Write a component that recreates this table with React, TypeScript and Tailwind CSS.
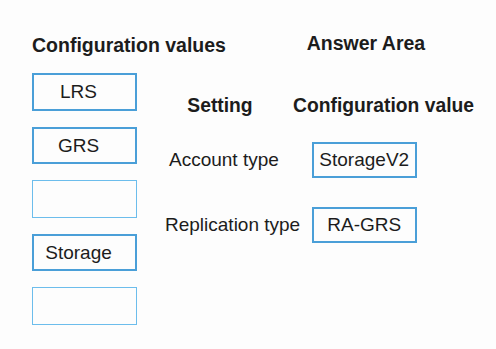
const leftValues = ['LRS', 'GRS', '', 'Storage', ''];

const rows = [
  { setting: 'Account type', value: 'StorageV2', pad: 'pl-[9px]' },
  { setting: 'Replication type', value: 'RA-GRS', pad: 'pl-[5px]' },
];

const ValueBox = ({ label }: { label: string }) => {
  if (!label) {
    return <div className="h-[37.5px] w-[105px] border-[1.5px] border-[#6cbdec]" />;
  }
  return (
    <div className="flex h-[37.5px] w-[105px] items-center justify-center border-2 border-[#4a9fd8] pr-[12px] text-[19px] leading-none">
      {label}
    </div>
  );
};

export default function App() {
  return (
    <div className="flex h-[349px] w-[496px] bg-[#fdfdfd] font-['Liberation_Sans',Arial,sans-serif] text-[#1c1c1c]">
      {/* Configuration values */}
      <div className="w-[160px] pl-[32px] pt-[36px]">
        <h2 className="text-[19.5px] font-bold leading-none whitespace-nowrap">Configuration values</h2>
        <div className="mt-[17.5px] flex flex-col gap-[16px]">
          {leftValues.map((v, i) => (
            <ValueBox key={i} label={v} />
          ))}
        </div>
      </div>

      {/* Answer area */}
      <div className="flex-1 pt-[33.8px]">
        <h2 className="ml-[146.7px] text-[19.5px] font-bold leading-none">Answer Area</h2>
        <div className="mt-[43.2px] grid grid-cols-[133px_1fr] text-[19.3px] font-bold leading-none">
          <div className="pl-[27.3px]">Setting</div>
          <div className="whitespace-nowrap">Configuration value</div>
        </div>
        <div className="mt-[26px] flex flex-col gap-[29.5px]">
          {rows.map((r) => (
            <div key={r.setting} className="grid grid-cols-[133px_1fr] items-center">
              <div className={`${r.pad} whitespace-nowrap text-[19px] leading-none`}>{r.setting}</div>
              <div className="pl-[18.5px]">
                <div className="flex h-[35.8px] w-[105.5px] items-center justify-center border-2 border-[#4a9fd8] text-[19px] leading-none">
                  {r.value}
                </div>
              </div>
            </div>
          ))}
        </div>
      </div>
    </div>
  );
}
